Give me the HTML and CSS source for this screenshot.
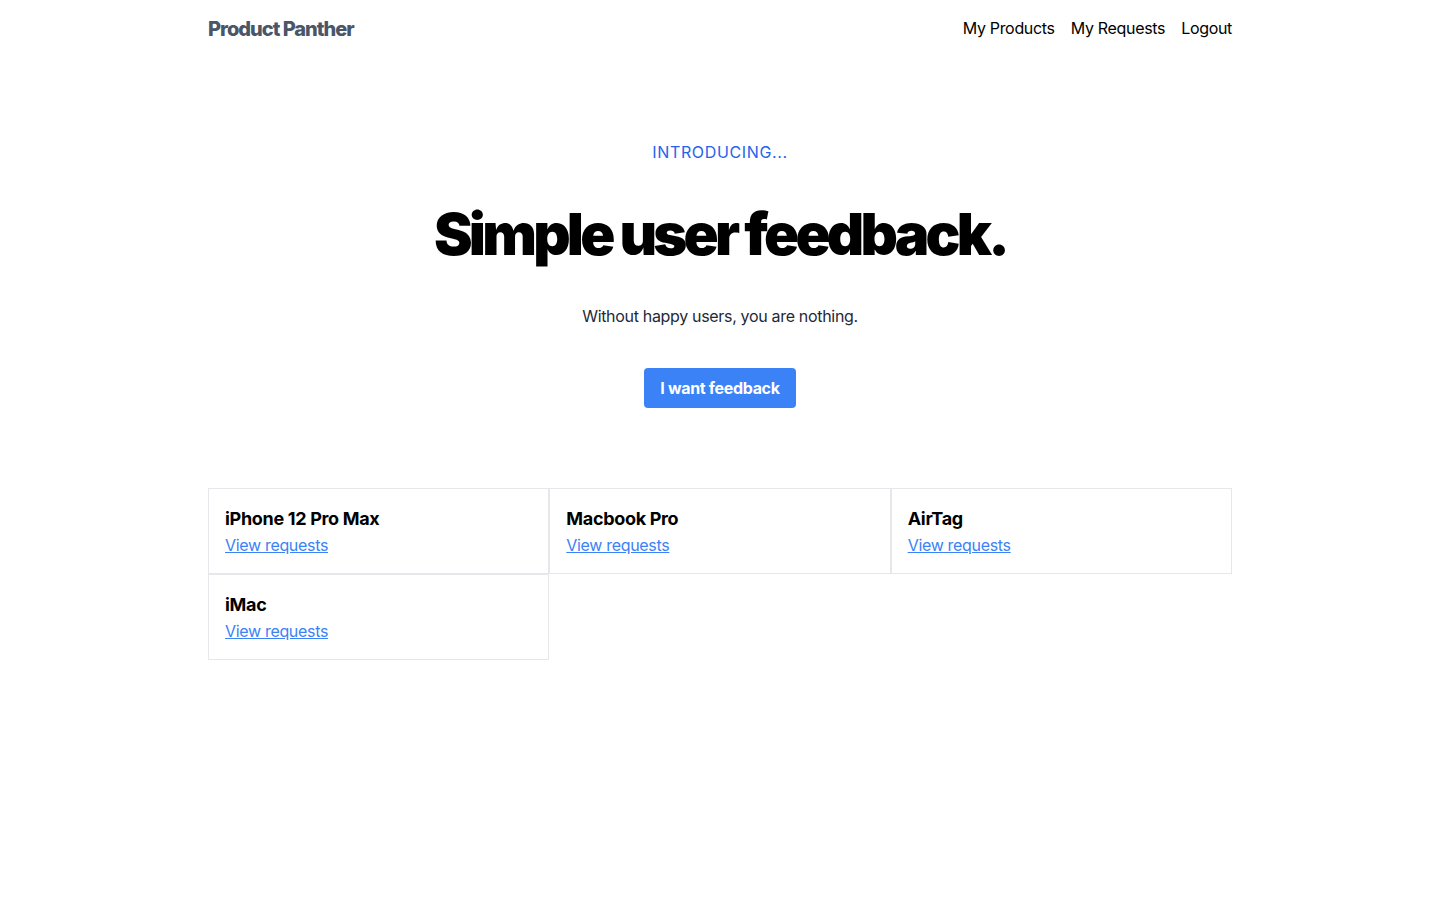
FILE: index.html
```html
<!DOCTYPE html>
<html lang="en">
<head>
<meta charset="utf-8">
<title>Product Panther</title>
<link rel="stylesheet" href="styles.css">
</head>
<body>
<div class="container">
  <header class="nav">
    <a class="logo" href="#">Product Panther</a>
    <nav class="links">
      <a href="#">My Products</a>
      <a href="#">My Requests</a>
      <a href="#">Logout</a>
    </nav>
  </header>
  <section class="hero">
    <p class="eyebrow">INTRODUCING...</p>
    <h1 class="title">Simple user feedback.</h1>
    <p class="sub">Without happy users, you are nothing.</p>
    <a class="btn" href="#">I want feedback</a>
  </section>
  <section class="grid">
    <div class="card"><h2>iPhone 12 Pro Max</h2><a href="#">View requests</a></div>
    <div class="card"><h2>Macbook Pro</h2><a href="#">View requests</a></div>
    <div class="card"><h2>AirTag</h2><a href="#">View requests</a></div>
    <div class="card"><h2>iMac</h2><a href="#">View requests</a></div>
  </section>
</div>
</body>
</html>
```
FILE: styles.css
```css
* { box-sizing: border-box; }
html, body { margin: 0; padding: 0; background: #fff; }
body {
  font-family: Inter, "Noto Sans", sans-serif;
  color: #000;
  font-size: 16px;
  line-height: 1.5;
  letter-spacing: -0.02em;
}
.container { width: 1024px; margin: 0 auto; }
.nav {
  display: flex;
  justify-content: space-between;
  align-items: center;
  height: 56px;
}
.logo {
  font-weight: 800;
  font-size: 20px;
  letter-spacing: -0.05em;
  color: #4a5568;
  text-decoration: none;
  padding-top: 2px;
}
.links { display: flex; gap: 16px; }
.links a { color: #000; text-decoration: none; font-size: 16px; }
.hero {
  display: flex;
  flex-direction: column;
  align-items: center;
  padding-top: 84px;
}
.eyebrow {
  margin: 0;
  color: #2563eb;
  letter-spacing: 0.04em;
  font-size: 16px;
  line-height: 24px;
}
.title {
  margin: 34px 0 0;
  font-size: 58px;
  font-weight: 900;
  letter-spacing: -0.065em;
  line-height: 72px;
}
.sub {
  margin: 34px 0 0;
  color: #1f2937;
  font-size: 16px;
  line-height: 24px;
}
.btn {
  margin-top: 40px;
  display: inline-block;
  background: #3b82f6;
  color: #fff;
  font-weight: 700;
  text-decoration: none;
  border-radius: 4px;
  padding: 8px 16px;
  line-height: 24px;
}
.grid {
  display: grid;
  grid-template-columns: repeat(3, 1fr);
  margin-top: 80px;
}
.card {
  border: 1px solid #e5e7eb;
  padding: 16px;
  height: 86px;
}
.card h2 {
  margin: 0;
  font-size: 18px;
  font-weight: 700;
  line-height: 28px;
}
.card a {
  color: #3b82f6;
  text-decoration: underline;
  font-size: 16px;
  line-height: 24px;
}
```
